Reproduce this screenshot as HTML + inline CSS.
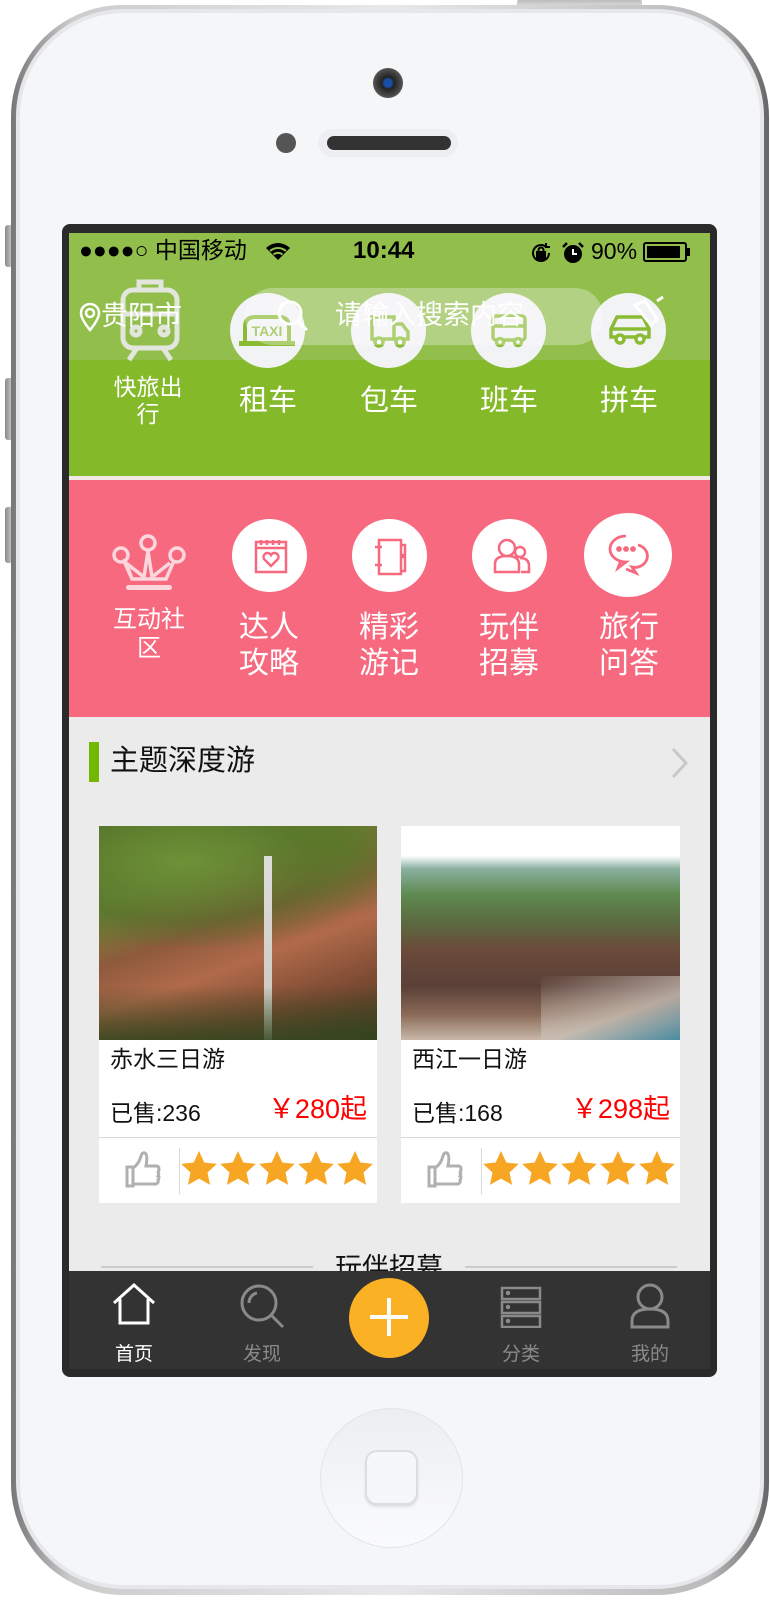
<!DOCTYPE html>
<html><head><meta charset="utf-8">
<style>
*{margin:0;padding:0;box-sizing:border-box}
body{width:770px;height:1600px;background:#fff;position:relative;overflow:hidden;font-family:"Liberation Sans","Noto Sans CJK SC",sans-serif}
.a{position:absolute}
.t{position:absolute;white-space:nowrap;text-align:center;line-height:1}
</style></head><body>
<svg width="0" height="0" style="position:absolute"><defs><path id="st" d="M19 1l5.3 11.5 12.5 1.4-9.3 8.6 2.6 12.4L19 28.6 7.9 34.9l2.6-12.4L1.2 13.9l12.5-1.4z" fill="#f6a623"/>
<path id="th" d="M8 17h6V36H8zM14 18q6-4 8-12 1-4 4-3 3 2 1 13h10q3 0 3 3t-2 3q3 1 1 4 2 1 0 4 1 3-2 4H14" fill="none" stroke="#b0b0b0" stroke-width="3"/></defs></svg>
<!-- side buttons -->
<div class="a" style="left:5px;top:225px;width:9px;height:42px;background:linear-gradient(90deg,#888,#ddd);border-radius:3px 0 0 3px"></div>
<div class="a" style="left:5px;top:378px;width:9px;height:62px;background:linear-gradient(90deg,#888,#ddd);border-radius:3px 0 0 3px"></div>
<div class="a" style="left:5px;top:507px;width:9px;height:56px;background:linear-gradient(90deg,#888,#ddd);border-radius:3px 0 0 3px"></div>
<div class="a" style="left:517px;top:0;width:125px;height:8px;background:linear-gradient(#bbb,#e5e5e5);border-radius:2px"></div>
<!-- phone body -->
<div class="a" style="left:11px;top:5px;width:758px;height:1590px;border-radius:112px;background:linear-gradient(90deg,#777,#ccc 8%,#e8e8e8 50%,#bbb 92%,#666)"></div>
<div class="a" style="left:16px;top:9px;width:748px;height:1580px;border-radius:108px;background:#e6e7ea"></div>
<div class="a" style="left:20px;top:13px;width:740px;height:1572px;border-radius:104px;background:#f5f6f8"></div>
<!-- camera etc -->
<div class="a" style="left:373px;top:68px;width:30px;height:30px;border-radius:50%;background:radial-gradient(circle,#1a4fa8 0,#1a4fa8 4px,#222 6px,#555 15px)"></div>
<div class="a" style="left:276px;top:133px;width:20px;height:20px;border-radius:50%;background:#555"></div>
<div class="a" style="left:318px;top:129px;width:140px;height:28px;border-radius:14px;background:#eceef1"></div>
<div class="a" style="left:327px;top:136px;width:124px;height:14px;border-radius:7px;background:#333"></div>
<!-- home button -->
<div class="a" style="left:320px;top:1408px;width:143px;height:140px;border-radius:50%;background:linear-gradient(#eceef1,#f4f5f7 55%,#fafbfc);border:1px solid #e3e4e7"></div>
<div class="a" style="left:365px;top:1450px;width:53px;height:55px;border-radius:12px;border:2px solid #dcdde0;background:#f6f7f9;box-shadow:0 2px 2px #ddd"></div>
<!-- bezel -->
<div class="a" style="left:62px;top:224px;width:655px;height:1153px;border-radius:8px;background:#2a2a2a"></div>
<!-- screen -->
<div class="a" style="left:69px;top:233px;width:641px;height:1136px;overflow:hidden;background:#ebebeb">
  <div class="a" style="left:0;top:0;width:645px;height:127px;background:#92be4c"></div>
  <div class="a" style="left:0;top:127px;width:645px;height:116px;background:#84b929"></div>
  <div class="a" style="left:0;top:243px;width:645px;height:4px;background:#f1e9e4"></div>
  <div class="a" style="left:0;top:247px;width:645px;height:237px;background:#f7697f"></div>
  <!-- status bar -->
  <div class="t" style="left:10px;top:6px;font-size:23px;color:#000;text-align:left">●●●●○ 中国移动</div>
  <svg class="a" style="left:196px;top:8px" width="26" height="20" viewBox="0 0 26 20"><path d="M13 19L1 7a17 17 0 0 1 24 0z" fill="#000"/><path d="M5 10a12 12 0 0 1 16 0M8.5 13.5a7 7 0 0 1 9 0" stroke="#92be4c" stroke-width="2" fill="none"/></svg>
  <div class="t" style="left:284px;top:6px;font-size:24px;font-weight:bold;color:#000">10:44</div>
  <svg class="a" style="left:460px;top:8px" width="24" height="24" viewBox="0 0 24 24" fill="none" stroke="#000" stroke-width="2"><path d="M20 12a8 8 0 1 1-3-6.2"/><path d="M17 2v4h4"/><rect x="8" y="11" width="8" height="7" fill="#000"/><path d="M9.5 11V9a2.5 2.5 0 0 1 5 0v2"/></svg>
  <svg class="a" style="left:492px;top:8px" width="24" height="24" viewBox="0 0 24 24"><circle cx="12" cy="13" r="9" fill="#000"/><path d="M12 8v5h4" stroke="#fff" stroke-width="2" fill="none"/><path d="M2 6l4-4M22 6l-4-4" stroke="#000" stroke-width="2.5"/></svg>
  <div class="t" style="left:522px;top:7px;font-size:23px;color:#000">90%</div>
  <div class="a" style="left:574px;top:9px;width:44px;height:20px;border:2px solid #000;border-radius:3px;padding:2px"><div style="width:92%;height:100%;background:#000"></div></div>
  <div class="a" style="left:618px;top:15px;width:3px;height:8px;background:#000"></div>
  <!-- train icon -->
  <svg class="a" style="left:48px;top:43px" width="66" height="86" viewBox="0 0 66 86" fill="none" stroke="#e3e6dc" stroke-width="5">
    <rect x="6" y="14" width="54" height="58" rx="10"/><path d="M22 14V6h22v8M6 38h54M20 72L12 84M46 72l8 12"/><circle cx="19" cy="55" r="4"/><circle cx="47" cy="55" r="4"/>
  </svg>
  <div class="t" style="left:38px;top:141px;width:82px;font-size:23px;color:#fff;line-height:27px">快旅出<br>行</div>
  <!-- circles row1 -->
  <div class="a" style="left:161px;top:60px;width:75px;height:75px;border-radius:50%;background:#f2f3f5"></div>
  <div class="a" style="left:282px;top:60px;width:75px;height:75px;border-radius:50%;background:#f2f3f5"></div>
  <div class="a" style="left:402px;top:60px;width:75px;height:75px;border-radius:50%;background:#f2f3f5"></div>
  <div class="a" style="left:522px;top:60px;width:75px;height:75px;border-radius:50%;background:#f2f3f5"></div>
  <svg class="a" style="left:168px;top:78px" width="60" height="40" viewBox="0 0 60 40"><path d="M8 30V16Q8 6 18 6h24q10 0 10 10v14" fill="none" stroke="#8bbb35" stroke-width="4"/><text x="30" y="25" font-size="14" font-weight="bold" fill="#8bbb35" text-anchor="middle" font-family="Liberation Sans">TAXI</text><rect x="2" y="30" width="56" height="5" fill="#8bbb35"/></svg>
  <svg class="a" style="left:300px;top:78px" width="42" height="38" viewBox="0 0 42 38" fill="none" stroke="#8bbb35" stroke-width="3.5"><path d="M3 6h22v22H3zM25 13h8l6 8v7H25"/><circle cx="10" cy="31" r="4" fill="#fff"/><circle cx="31" cy="31" r="4" fill="#fff"/></svg>
  <svg class="a" style="left:421px;top:78px" width="38" height="38" viewBox="0 0 38 38" fill="none" stroke="#8bbb35" stroke-width="3.5"><rect x="3" y="5" width="32" height="24" rx="3"/><path d="M3 15h32"/><circle cx="10" cy="31" r="3.5" fill="#fff"/><circle cx="28" cy="31" r="3.5" fill="#fff"/></svg>
  <svg class="a" style="left:539px;top:78px" width="44" height="36" viewBox="0 0 44 36" fill="none" stroke="#8bbb35" stroke-width="3.5"><path d="M3 26V18l6-12h26l6 12v8zM3 18h38"/><circle cx="12" cy="28" r="4" fill="#fff"/><circle cx="32" cy="28" r="4" fill="#fff"/></svg>
  <div class="t" style="left:149px;top:154px;width:100px;font-size:29px;color:#fff">租车</div>
  <div class="t" style="left:270px;top:154px;width:100px;font-size:29px;color:#fff">包车</div>
  <div class="t" style="left:390px;top:154px;width:100px;font-size:29px;color:#fff">班车</div>
  <div class="t" style="left:510px;top:154px;width:100px;font-size:29px;color:#fff">拼车</div>
  <!-- location / search -->
  <svg class="a" style="left:10px;top:69px" width="22" height="30" viewBox="0 0 22 30" fill="none" stroke="#fff" stroke-width="2.5"><path d="M11 28Q2 17 2 11a9 9 0 0 1 18 0q0 6-9 17z"/><circle cx="11" cy="11" r="4"/></svg>
  <div class="t" style="left:32px;top:70px;font-size:27px;color:#fff;text-align:left">贵阳市</div>
  <div class="a" style="left:176px;top:55px;width:358px;height:57px;border-radius:28px;background:rgba(255,255,255,.3)"></div>
  <svg class="a" style="left:207px;top:66px" width="34" height="34" viewBox="0 0 34 34" fill="none" stroke="#fff" stroke-width="3"><circle cx="14" cy="14" r="11"/><path d="M22 22l9 9"/></svg>
  <div class="t" style="left:266px;top:69px;font-size:27px;color:#fff">请输入搜索内容</div>
  <svg class="a" style="left:560px;top:62px" width="38" height="38" viewBox="0 0 38 38" fill="none" stroke="#fff" stroke-width="3"><path d="M6 10l10-4 12 18-6 6zM28 6l6-4"/></svg>
  <!-- pink row -->
  <svg class="a" style="left:43px;top:300px" width="74" height="58" viewBox="0 0 74 58" fill="none" stroke="#fcd6dd" stroke-width="3.5"><circle cx="36" cy="10" r="7"/><circle cx="9" cy="22" r="7"/><circle cx="65" cy="22" r="7"/><path d="M12 28l8 18h34l8-18M20 46l-6-16 18 14 4-26 4 26 18-14"/><rect x="14" y="52" width="46" height="5" rx="2.5" fill="#fcd6dd" stroke="none"/></svg>
  <div class="t" style="left:30px;top:372px;width:100px;font-size:24px;color:#fff;line-height:29px">互动社<br>区</div>
  <div class="a" style="left:163px;top:286px;width:75px;height:73px;border-radius:50%;background:#fff"></div>
  <div class="a" style="left:283px;top:286px;width:75px;height:73px;border-radius:50%;background:#fff"></div>
  <div class="a" style="left:403px;top:286px;width:75px;height:73px;border-radius:50%;background:#fff"></div>
  <div class="a" style="left:515px;top:280px;width:88px;height:84px;border-radius:50%;background:#fff"></div>
  <svg class="a" style="left:184px;top:305px" width="36" height="36" viewBox="0 0 36 36" fill="none" stroke="#f7697f" stroke-width="2.5"><rect x="3" y="4" width="30" height="30"/><path d="M3 10h30M8 2v5M14 2v5M20 2v5M26 2v5M18 28l-7-7a4 4 0 0 1 7-4 4 4 0 0 1 7 4z"/></svg>
  <svg class="a" style="left:304px;top:304px" width="36" height="40" viewBox="0 0 36 40" fill="none" stroke="#f7697f" stroke-width="2.5"><rect x="6" y="3" width="22" height="34"/><path d="M2 10h7M2 28h7M28 8h4v10h-4M28 20h4v14h-4"/></svg>
  <svg class="a" style="left:423px;top:303px" width="40" height="40" viewBox="0 0 40 40" fill="none" stroke="#f7697f" stroke-width="2.5"><circle cx="15" cy="12" r="8"/><path d="M3 36v-8q0-8 12-8t12 8v8z"/><circle cx="28" cy="16" r="5"/><path d="M28 22q9 0 9 8v6h-8"/></svg>
  <svg class="a" style="left:537px;top:300px" width="46" height="44" viewBox="0 0 46 44" fill="none" stroke="#f7697f" stroke-width="2.8"><path d="M20 3a16 13 0 1 0 0 26l-8 6 3-8"/><path d="M32 12a12 11 0 1 1-6 22l4 6-10-4"/><circle cx="13" cy="16" r="1.5" fill="#f7697f"/><circle cx="20" cy="16" r="1.5" fill="#f7697f"/><circle cx="27" cy="16" r="1.5" fill="#f7697f"/></svg>
  <div class="t" style="left:150px;top:377px;width:100px;font-size:30px;color:#fff;line-height:36px">达人<br>攻略</div>
  <div class="t" style="left:270px;top:377px;width:100px;font-size:30px;color:#fff;line-height:36px">精彩<br>游记</div>
  <div class="t" style="left:390px;top:377px;width:100px;font-size:30px;color:#fff;line-height:36px">玩伴<br>招募</div>
  <div class="t" style="left:510px;top:377px;width:100px;font-size:30px;color:#fff;line-height:36px">旅行<br>问答</div>
  <!-- section title -->
  <div class="a" style="left:20px;top:509px;width:10px;height:40px;background:#72b800"></div>
  <div class="t" style="left:41px;top:514px;font-size:29px;color:#111;text-align:left">主题深度游</div>
  <svg class="a" style="left:600px;top:513px" width="22" height="34" viewBox="0 0 22 34" fill="none" stroke="#c8c8c8" stroke-width="3"><path d="M4 3l13 14L4 31"/></svg>
  <!-- card1 -->
  <div class="a" style="left:30px;top:593px;width:278px;height:377px;background:#fff">
    <div class="a" style="left:0;top:0;width:278px;height:214px;background:linear-gradient(160deg,#5e7a2c 0%,#6d8a36 25%,#8e5a3c 45%,#b06a4a 60%,#7b4a32 80%,#3d3a20 100%)"></div>
    <div class="a" style="left:0;top:0;width:278px;height:120px;background:radial-gradient(ellipse at 30% 30%,rgba(110,145,55,.95),rgba(80,110,40,.6) 50%,rgba(0,0,0,0) 75%)"></div>
    <div class="a" style="left:150px;top:0;width:128px;height:90px;background:radial-gradient(ellipse at 70% 20%,rgba(90,120,40,.9),rgba(0,0,0,0) 70%)"></div>
    <div class="a" style="left:165px;top:30px;width:8px;height:184px;background:linear-gradient(#ddd,#cbc6bc)"></div>
    <div class="a" style="left:0;top:160px;width:278px;height:54px;background:linear-gradient(rgba(60,70,30,0),rgba(50,70,30,.85))"></div>
    <div class="t" style="left:11px;top:222px;font-size:23px;color:#111">赤水三日游</div>
    <div class="t" style="left:11px;top:276px;font-size:23px;color:#111">已售:236</div>
    <div class="t" style="right:10px;top:270px;font-size:27px;color:#f00">￥280起</div>
    <div class="a" style="left:0;top:311px;width:278px;height:1px;background:#d8d8d8"></div>
    <div class="a" style="left:80px;top:322px;width:1px;height:46px;background:#d8d8d8"></div>
    <svg class="a" style="left:20px;top:324px" width="44" height="40" viewBox="0 0 44 40"><use href="#th"/></svg>
    <svg class="a" style="left:81px;top:324px" width="195" height="38" viewBox="0 0 195 38"><use href="#st"/><use href="#st" x="39"/><use href="#st" x="78"/><use href="#st" x="117"/><use href="#st" x="156"/></svg>
  </div>
  <!-- card2 -->
  <div class="a" style="left:332px;top:593px;width:279px;height:377px;background:#fff">
    <div class="a" style="left:0;top:0;width:279px;height:214px;background:linear-gradient(#fff 0,#fff 14%,#8ab0a0 20%,#5f8a50 32%,#5b6a40 45%,#6b4a3a 58%,#5a4038 75%,#8a6a58 88%,#c8b8a8 100%)"></div>
    <div class="a" style="left:140px;top:150px;width:139px;height:64px;background:linear-gradient(160deg,rgba(0,0,0,0),rgba(200,190,180,.8) 60%,#4a8aa0)"></div>
    <div class="t" style="left:11px;top:222px;font-size:23px;color:#111">西江一日游</div>
    <div class="t" style="left:11px;top:276px;font-size:23px;color:#111">已售:168</div>
    <div class="t" style="right:10px;top:270px;font-size:27px;color:#f00">￥298起</div>
    <div class="a" style="left:0;top:311px;width:279px;height:1px;background:#d8d8d8"></div>
    <div class="a" style="left:80px;top:322px;width:1px;height:46px;background:#d8d8d8"></div>
    <svg class="a" style="left:20px;top:324px" width="44" height="40" viewBox="0 0 44 40"><use href="#th"/></svg>
    <svg class="a" style="left:81px;top:324px" width="195" height="38" viewBox="0 0 195 38"><use href="#st"/><use href="#st" x="39"/><use href="#st" x="78"/><use href="#st" x="117"/><use href="#st" x="156"/></svg>
  </div>
  <!-- partial next section -->
  <div class="a" style="left:32px;top:1033px;width:212px;height:2px;background:#ccc"></div>
  <div class="a" style="left:396px;top:1033px;width:212px;height:2px;background:#ccc"></div>
  <div class="t" style="left:250px;top:1022px;width:140px;font-size:27px;color:#111">玩伴招募</div>
  <!-- tab bar -->
  <div class="a" style="left:0;top:1038px;width:645px;height:98px;background:#333"></div>
  <svg class="a" style="left:43px;top:1050px" width="44" height="42" viewBox="0 0 44 42" fill="none" stroke="#fff" stroke-width="3"><path d="M2 20L22 2l20 18M8 16v24h28V16"/></svg>
  <svg class="a" style="left:170px;top:1050px" width="48" height="48" viewBox="0 0 48 48" fill="none" stroke="#8a8a8a" stroke-width="3"><circle cx="20" cy="20" r="17"/><path d="M32 32l12 12M10 20a10 10 0 0 1 8-10"/></svg>
  <div class="a" style="left:280px;top:1045px;width:80px;height:80px;border-radius:50%;background:#fbb124"></div>
  <div class="a" style="left:301px;top:1082px;width:38px;height:4px;background:#fff"></div>
  <div class="a" style="left:318px;top:1065px;width:4px;height:38px;background:#fff"></div>
  <svg class="a" style="left:431px;top:1053px" width="42" height="42" viewBox="0 0 42 42" fill="none" stroke="#8a8a8a" stroke-width="2.5"><rect x="2" y="2" width="38" height="11"/><rect x="2" y="16" width="38" height="11"/><rect x="2" y="30" width="38" height="11"/><circle cx="8" cy="7" r="1" fill="#8a8a8a"/><circle cx="8" cy="21" r="1" fill="#8a8a8a"/><circle cx="8" cy="35" r="1" fill="#8a8a8a"/></svg>
  <svg class="a" style="left:560px;top:1050px" width="42" height="46" viewBox="0 0 42 46" fill="none" stroke="#8a8a8a" stroke-width="3"><circle cx="21" cy="14" r="12"/><path d="M3 44v-6q0-12 18-12t18 12v6z"/></svg>
  <div class="t" style="left:25px;top:1112px;width:80px;font-size:19px;color:#fff">首页</div>
  <div class="t" style="left:153px;top:1112px;width:80px;font-size:19px;color:#8a8a8a">发现</div>
  <div class="t" style="left:412px;top:1112px;width:80px;font-size:19px;color:#8a8a8a">分类</div>
  <div class="t" style="left:541px;top:1112px;width:80px;font-size:19px;color:#8a8a8a">我的</div>
</div>
</body></html>
